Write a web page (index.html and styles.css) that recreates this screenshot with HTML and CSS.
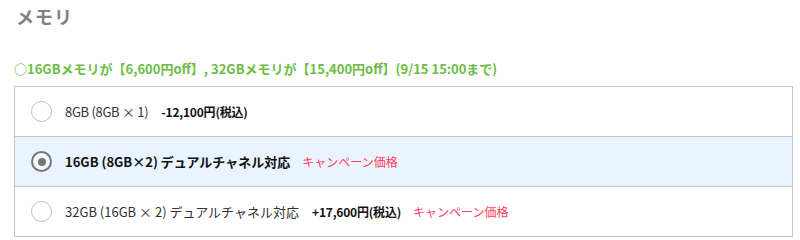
FILE: index.html
```html
<!DOCTYPE html>
<html lang="ja">
<head>
<meta charset="utf-8">
<link rel="stylesheet" href="styles.css">
</head>
<body>
<div class="page">
  <h2 class="title">メモリ</h2>
  <p class="notice">○16GBメモリが【6,600円off】, 32GBメモリが【15,400円off】(9/15 15:00まで)</p>
  <ul class="options">
    <li class="option">
      <span class="radio"></span>
      <span class="label short">8GB (8GB × 1)</span>
      <span class="price">-12,100円(税込)</span>
    </li>
    <li class="option selected">
      <span class="radio"></span>
      <span class="label">16GB (8GB×2) デュアルチャネル対応</span>
      <span class="campaign">キャンペーン価格</span>
    </li>
    <li class="option">
      <span class="radio"></span>
      <span class="label">32GB (16GB × 2) デュアルチャネル対応</span>
      <span class="price">+17,600円(税込)</span>
      <span class="campaign">キャンペーン価格</span>
    </li>
  </ul>
</div>
</body>
</html>
```
FILE: styles.css
```css
html, body {
  margin: 0;
  padding: 0;
  background: #fff;
}
.page {
  padding: 0 7px 0 14px;
  font-family: "Noto Sans CJK JP", "Noto Sans", sans-serif;
  color: #222;
}
.title {
  margin: 0;
  padding: 3px 0 0 2px;
  font-size: 18px;
  line-height: 26px;
  font-weight: bold;
  color: #808080;
  letter-spacing: 1px;
}
.notice {
  margin: 0;
  padding-top: 31px;
  font-size: 13px;
  line-height: 17px;
  font-weight: bold;
  color: #6cbd45;
}
.options {
  list-style: none;
  margin: 9px 0 0;
  padding: 0;
  border: 1px solid #c4c4c8;
}
.option {
  display: flex;
  align-items: center;
  height: 49px;
  padding-left: 16px;
  font-size: 13px;
  color: #333;
}
.option + .option {
  border-top: 1px solid #c4c4c8;
}
.option.selected {
  background: #eaf4ff;
  color: #111;
  font-weight: bold;
}
.label.short {
  letter-spacing: -0.3px;
}
.radio {
  width: 19px;
  height: 19px;
  border: 1px solid #bcbcbc;
  border-radius: 50%;
  background: #fff;
  margin-right: 13px;
  box-sizing: content-box;
  position: relative;
}
.selected .radio {
  width: 17px;
  height: 17px;
  border: 2px solid #767676;
  background: #f5f8fb;
}
.selected .radio::after {
  content: "";
  position: absolute;
  left: 4.5px;
  top: 4.5px;
  width: 8px;
  height: 8px;
  border-radius: 50%;
  background: #767676;
}
.price {
  margin-left: 13px;
  font-size: 12px;
  letter-spacing: -0.2px;
  font-weight: bold;
  color: #111;
}
.campaign {
  margin-left: 12px;
  font-size: 12px;
  color: #ff3d5a;
  font-weight: normal;
}
```
